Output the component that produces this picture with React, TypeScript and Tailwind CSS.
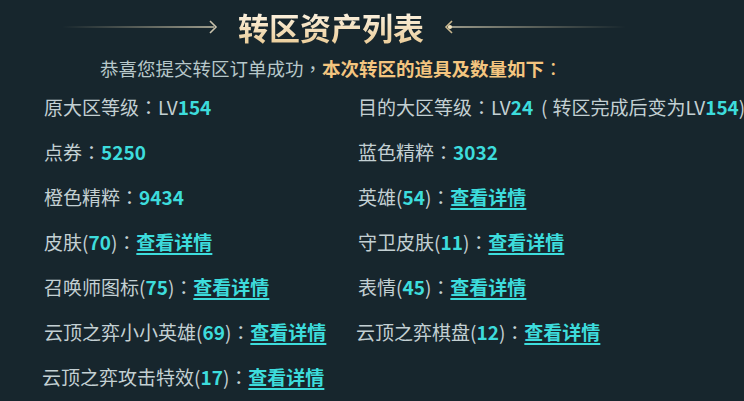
const FONT = { fontFamily: '"Noto Sans CJK SC", "Noto Sans", sans-serif' };

type Row = { label: string; value?: string; prefix?: string; suffix?: React.ReactNode; link?: boolean };

// centred full-width punctuation, as in the reference
function Punct({ c }: { c: string }) {
  return <span className="font-['Noto_Sans_CJK_TC'] font-normal">{c}</span>;
}

function Item({ label, value, prefix, suffix, link }: Row) {
  return (
    <div className="flex items-center whitespace-nowrap text-[19px] text-[#c3d0d3]">
      <span>{label}</span>
      {link ? (
        <>
          <span>(</span>
          <span className="font-bold text-[#3ddcdc]">{value}</span>
          <span>)</span>
          <Punct c="：" />
          <a className="font-bold text-[#3ddcdc] underline decoration-[1.5px] underline-offset-[3px]">查看详情</a>
        </>
      ) : (
        <>
          <Punct c="：" />
          {prefix && <span>{prefix}</span>}
          <span className="font-bold text-[#3ddcdc]">{value}</span>
          {suffix}
        </>
      )}
    </div>
  );
}

function Arrow({ dir }: { dir: "right" | "left" }) {
  const right = dir === "right";
  const w = right ? 160 : 186;
  return (
    <svg width={w} height="16" viewBox={`0 0 ${w} 16`} className="shrink-0">
      <defs>
        <linearGradient id={`g-${dir}`} x1={right ? "0" : "1"} x2={right ? "1" : "0"} y1="0" y2="0">
          <stop offset="0" stopColor="#e8d8b0" stopOpacity="0" />
          <stop offset="1" stopColor="#f1e6c8" stopOpacity="1" />
        </linearGradient>
      </defs>
      {right ? (
        <>
          <rect x="0" y="7.4" width={w - 8} height="1.2" fill={`url(#g-${dir})`} />
          <polyline points={`${w - 12},2 ${w - 6},8 ${w - 12},14`} fill="none" stroke="#c9c2ad" strokeWidth="1.6" />
        </>
      ) : (
        <>
          <rect x="8" y="7.4" width={w - 8} height="1.2" fill={`url(#g-${dir})`} />
          <polyline points="12,2 6,8 12,14" fill="none" stroke="#c9b78f" strokeWidth="1.6" />
          <circle cx="10" cy="8" r="2" fill="#f3e3bd" />
        </>
      )}
    </svg>
  );
}

export default function App() {
  const rows: [Row, Row | null][] = [
    [
      { label: "原大区等级", prefix: "LV", value: "154" },
      {
        label: "目的大区等级",
        prefix: "LV",
        value: "24",
        suffix: (
          <>
            <span className="ml-[8px] mr-[5px]">(</span>
            <span>转区完成后变为LV</span>
            <span className="font-bold text-[#3ddcdc]">154</span>
            <span>)</span>
          </>
        ),
      },
    ],
    [
      { label: "点券", value: "5250" },
      { label: "蓝色精粹", value: "3032" },
    ],
    [
      { label: "橙色精粹", value: "9434" },
      { label: "英雄", value: "54", link: true },
    ],
    [
      { label: "皮肤", value: "70", link: true },
      { label: "守卫皮肤", value: "11", link: true },
    ],
    [
      { label: "召唤师图标", value: "75", link: true },
      { label: "表情", value: "45", link: true },
    ],
    [
      { label: "云顶之弈小小英雄", value: "69", link: true },
      { label: "云顶之弈棋盘", value: "12", link: true },
    ],
    [{ label: "云顶之弈攻击特效", value: "17", link: true }, null],
  ];

  return (
    <div className="h-[401px] w-[744px] overflow-hidden bg-[#17262d]" style={FONT}>
      <div className="flex items-center gap-[16px] pl-[62px] pt-[5px]">
        <Arrow dir="right" />
        <h1 className="bg-gradient-to-b from-[#fffaf0] to-[#e9c88f] bg-clip-text text-[31px] font-bold leading-[44px] text-transparent">
          转区资产列表
        </h1>
        <Arrow dir="left" />
      </div>
      <p className="mt-[7px] pl-[100px] text-[18.5px] leading-[24px] text-[#b7c8ca]">
        恭喜您提交转区订单成功<Punct c="，" />
        <span className="font-bold text-[#f4c57f]">
          本次转区的道具及数量如下<Punct c="：" />
        </span>
      </p>
      <div className="mt-[5px] grid grid-cols-[314px_1fr] pl-[44px]">
        {rows.map(([l, r], i) => (
          <div key={i} className="contents">
            <div className={`flex h-[45px] items-center ${i === 6 ? "-ml-[2px]" : ""}`}>
              <Item {...l} />
            </div>
            <div className={`flex h-[45px] items-center ${i === 5 ? "-ml-[2px]" : ""}`}>{r && <Item {...r} />}</div>
          </div>
        ))}
      </div>
    </div>
  );
}
